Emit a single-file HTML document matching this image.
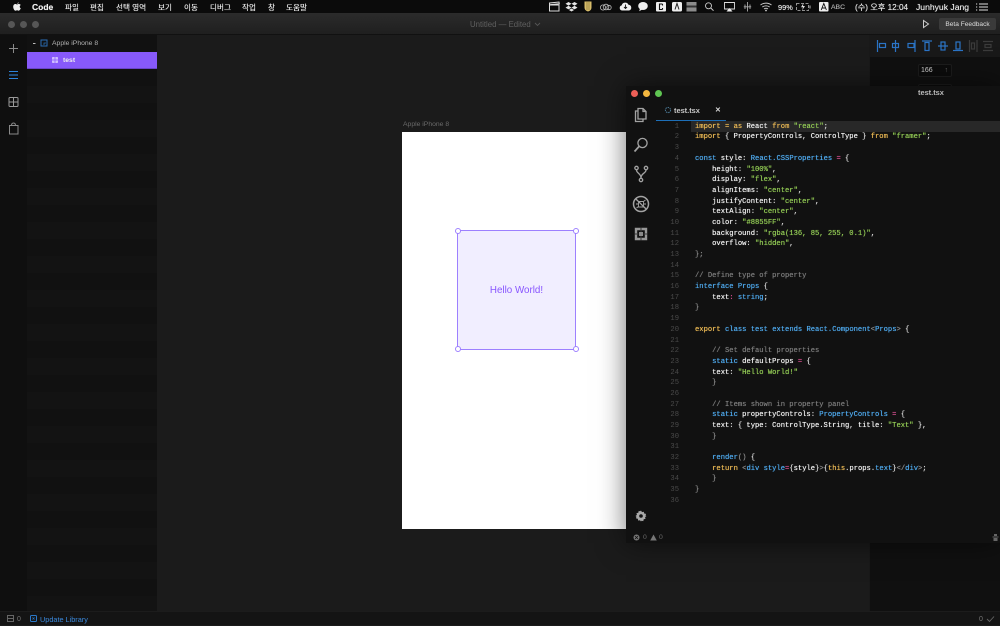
<!DOCTYPE html>
<html>
<head>
<meta charset="utf-8">
<style>
html{margin:0;padding:0;background:#1b1b1b}
body{margin:0;padding:0;width:1000px;height:625px;position:relative;overflow:hidden;background:#1b1b1b;font-family:"Liberation Sans","Noto Sans CJK KR",sans-serif;filter:blur(.3px)}
.a{position:absolute}
.t{position:absolute;white-space:pre;line-height:12px}
#menu{left:0;top:0;width:1000px;height:13px;background:#0b0b0b}
#menu .t{top:.5px;line-height:13px;font-size:7.6px;color:#e2e2e2;text-shadow:0 0 .4px currentColor}
#title{left:0;top:13px;width:1000px;height:22px;background:linear-gradient(#2b2b2b,#1f1f1f);border-bottom:1px solid #111;box-sizing:border-box}
.dot{position:absolute;border-radius:50%;width:7px;height:7px}
#rail{left:0;top:35px;width:27px;height:576px;background:#0f0f0f}
#layers{left:27px;top:35px;width:130px;height:576px;background:repeating-linear-gradient(#111 0 17px,#131313 17px 34px)}
#right{left:869px;top:35px;width:131px;height:576px;background:#101010;border-left:1px solid #191919;box-sizing:border-box}
#bottom{left:0;top:611px;width:1000px;height:14px;background:#141414;border-top:1px solid #1c1c1c;box-sizing:border-box}
#board{left:402px;top:132px;width:240px;height:397px;background:#fff}
#sel{left:457px;top:230px;width:117px;height:117.500px;background:#f1eeff;border:1px solid #9d80ff;color:#8855ff;font-size:9.800px;line-height:119px;text-align:center}
.h{position:absolute;width:4px;height:4px;background:#fff;border:1px solid #9d80ff;border-radius:50%}
#ed{left:626px;top:86px;width:374px;height:457px;background:#111;box-shadow:0 0 26px rgba(0,0,0,.55)}
#code{position:absolute;left:69px;top:35.800px;font-family:"Liberation Mono",monospace;font-size:7.150px;line-height:10.686px;white-space:pre;color:#d9d9d9;text-shadow:0 0 .5px currentColor}
#nums{position:absolute;left:30px;width:23px;top:35.800px;text-align:right;font-family:"Liberation Mono",monospace;font-size:7.150px;line-height:10.686px;color:#4a4a4a;white-space:pre}
.k{color:#eebb55}.s{color:#93cc55}.b{color:#4fabf0}.p{color:#d64f90}.c{color:#7c7c7c}.w{color:#f2f2f2}.g{color:#8a8a8a}
svg{position:absolute;overflow:visible}
</style>
</head>
<body>
<!-- canvas elements -->
<div class="t" style="left:403px;top:119px;font-size:6.800px;color:#6a6a6a">Apple iPhone 8</div>
<div class="a" id="board"></div>
<div class="a" id="sel">Hello World!</div>
<div class="h" style="left:454.500px;top:227.500px"></div>
<div class="h" style="left:572.500px;top:227.500px"></div>
<div class="h" style="left:454.500px;top:346px"></div>
<div class="h" style="left:572.500px;top:346px"></div>

<!-- menu bar -->
<div class="a" id="menu">
  <svg style="left:13px;top:2px" width="8" height="9" viewBox="0 0 8 9"><path d="M5.600 0.300C5 .5 4.400 1.100 4.400 1.900 5.100 1.900 5.700 1.200 5.600 .3ZM4.100 2.400C3.500 2.400 3 2 2.400 2 1.200 2 .2 3.100 .2 4.700 .2 6.500 1.400 8.700 2.500 8.700 3 8.700 3.400 8.300 4.100 8.300 4.800 8.300 5.100 8.700 5.700 8.700 6.600 8.700 7.400 7.300 7.800 6.300 6.500 5.700 6.400 3.800 7.700 3 7.200 2.300 6.500 2 5.800 2 5.100 2 4.600 2.400 4.100 2.400Z" fill="#eee"/></svg>
  <div class="t" style="left:32px;font-weight:700;color:#eee;font-size:8.500px">Code</div>
  <div class="t" style="left:65px">파일</div>
  <div class="t" style="left:90px">편집</div>
  <div class="t" style="left:116px">선택 영역</div>
  <div class="t" style="left:158px">보기</div>
  <div class="t" style="left:184px">이동</div>
  <div class="t" style="left:210px">디버그</div>
  <div class="t" style="left:242px">작업</div>
  <div class="t" style="left:268px">창</div>
  <div class="t" style="left:286px">도움말</div>

  <svg style="left:0;top:0" width="1000" height="13" viewBox="0 0 1000 13">
    <path d="M549.500 5h9.500v6h-9.500zM549.500 3l9.500-1 .3 1.800-9.800 1z" fill="none" stroke="#ddd" stroke-width="1"/>
    <path d="M568.500 2l3 1.800-3 1.800-3-1.800zM574.500 2l3 1.800-3 1.800-3-1.800zM568.500 5.800l3 1.800-3 1.800-3-1.800zM574.500 5.800l3 1.800-3 1.800-3-1.800zM571.500 8.500l2.600 1.500-2.600 1.500-2.600-1.500z" fill="#e6e6e6"/>
    <path d="M584.500 1.500h7v6q0 3-3.500 4-3.500-1-3.500-4z" fill="#d8bd6a"/>
    <path d="M587 2v8M589 2v8" stroke="#8d7c3f" stroke-width=".8"/>
    <circle cx="603" cy="7.500" r="2.600" fill="none" stroke="#bbb" stroke-width=".8"/><circle cx="606" cy="7" r="2.800" fill="none" stroke="#bbb" stroke-width=".8"/><circle cx="609" cy="7.500" r="2.200" fill="none" stroke="#bbb" stroke-width=".8"/>
    <path d="M622 10.500a2.600 2.600 0 0 1-.3-5.100 3.600 3.600 0 0 1 6.800-.6 2.900 2.900 0 0 1 .6 5.700z" fill="#eee"/>
    <path d="M625.500 4.500v4M624 7l1.500 1.500L627 7" stroke="#111" stroke-width=".9" fill="none"/>
    <ellipse cx="643" cy="6" rx="4.800" ry="4" fill="#eee"/><path d="M640 8.500l-.8 2.800 3-1.800z" fill="#eee"/>
    <rect x="656" y="2" width="10" height="9.500" rx="1" fill="#eee"/><path d="M662.500 4h-3v5.500h3M662.500 4v1.500M662.500 8v1.500" stroke="#111" stroke-width="1.100" fill="none"/>
    <rect x="672" y="2" width="10" height="9.500" rx="1.500" fill="#eee"/><path d="M675 9.500l2-6 2 6" stroke="#222" stroke-width="1" fill="none"/>
    <rect x="686.500" y="2" width="10" height="9.500" fill="#8b8b8b"/><rect x="686.500" y="5.500" width="10" height="2" fill="#333"/>
    <circle cx="708.500" cy="5.800" r="3" fill="none" stroke="#ccc" stroke-width=".9"/><path d="M710.800 8l2.700 2.700" stroke="#ccc" stroke-width="1"/>
    <path d="M724.500 2.500h10v6.500h-10z" fill="none" stroke="#ddd" stroke-width=".9"/><path d="M726.500 11.500l3-3.500 3 3.500z" fill="#eee"/>
    <path d="M747.500 2v9.500M745 4.500v4.500M750 4.500v4.500M743.800 6.800h7.400" stroke="#aaa" stroke-width=".9"/>
    <path d="M760.500 5a9 9 0 0 1 11 0M762.300 7a6.200 6.200 0 0 1 7.400 0M764 9a3.300 3.300 0 0 1 4 0" stroke="#ccc" stroke-width=".9" fill="none"/><circle cx="766" cy="10.500" r=".9" fill="#ccc"/>
    <rect x="796.500" y="3.500" width="12" height="7" fill="none" stroke="#bbb" stroke-width=".8" stroke-dasharray="3 1.500"/><path d="M803.500 3l-2.500 4.200h2l-1 3.300 3-4.500h-2z" fill="#ddd"/><rect x="809.500" y="5.500" width="1" height="3" fill="#bbb"/>
    <rect x="819" y="2" width="9.500" height="9.500" rx="1" fill="#eee"/><path d="M821.200 10l2.600-6.500 2.600 6.500M822 8h3.600" stroke="#111" stroke-width=".9" fill="none"/>
    <path d="M976 4h1.200M976 7h1.200M976 10h1.200M979 4h9M979 7h9M979 10h9" stroke="#ddd" stroke-width="1"/>
  </svg>
  <div class="t" style="left:778px;font-size:7.400px">99%</div>
  <div class="t" style="left:831px;font-size:6.800px;color:#aaa">ABC</div>
  <div class="t" style="left:855px;font-size:8.200px">(수) 오후 12:04</div>
  <div class="t" style="left:916px;font-size:8.600px;color:#e6e6e6">Junhyuk Jang</div>
</div>

<!-- title bar -->
<div class="a" id="title">
  <div class="dot" style="left:8px;top:7.500px;background:#565656"></div>
  <div class="dot" style="left:20px;top:7.500px;background:#565656"></div>
  <div class="dot" style="left:32px;top:7.500px;background:#565656"></div>
  <div class="t" style="left:470px;top:5.500px;font-size:7.800px;color:#606060">Untitled — Edited</div>
  <svg style="left:534px;top:9px" width="7" height="5"><path d="M1 1l2.500 2.500L6 1" stroke="#555" fill="none" stroke-width=".9"/></svg>
  <svg style="left:922px;top:6px" width="8" height="10"><path d="M1.500 1.500v7l5-3.500z" stroke="#ccc" fill="none" stroke-width="1"/></svg>
  <div class="a" style="left:939px;top:5px;width:57px;height:12px;background:#3a3a3a;border-radius:2px;color:#ddd;font-size:6.600px;line-height:13px;text-align:center">Beta Feedback</div>
</div>

<!-- left rail -->
<div class="a" id="rail">
  <svg style="left:0;top:0" width="27" height="110">
    <path d="M13.500 9v9M9 13.500h9" stroke="#8a8a8a" stroke-width="1"/>
    <path d="M9 36.500h9M9 40h9M9 43.500h9" stroke="#2d84dc" stroke-width="1"/>
    <rect x="9" y="62.500" width="9" height="9" rx="1" fill="none" stroke="#9a9a9a" stroke-width="1"/><path d="M13.500 62.500v9M9 67h9" stroke="#9a9a9a" stroke-width="1"/>
    <path d="M9.500 90.500h8.500v8.500h-8.500zM11.500 90.500q0-2.500 2-2.500t2 2.500" fill="none" stroke="#8a8a8a" stroke-width="1"/>
  </svg>
</div>

<!-- layers -->
<div class="a" id="layers">
  <svg style="left:0;top:0" width="40" height="17">
    <path d="M6 8.500h2.500" stroke="#bbb" stroke-width="1"/>
    <rect x="14" y="5" width="6" height="6" fill="none" stroke="#2a6db5" stroke-width="1"/><path d="M17 10v-2h2" stroke="#2a6db5" fill="none" stroke-width=".8"/>
  </svg>
  <div class="t" style="left:25px;top:3px;font-size:6.800px;color:#b0b0b0">Apple iPhone 8</div>
  <div class="a" style="left:0;top:17px;width:130px;height:17px;background:#8759fa;border-bottom:1px solid #6a45c8;box-sizing:border-box">
    <svg style="left:25px;top:5px" width="6" height="6"><rect x=".5" y=".5" width="5" height="5" fill="#cdbcff" stroke="#e8e0ff" stroke-width=".6"/><path d="M3 0v6M0 3h6" stroke="#8759fa" stroke-width=".7"/></svg>
    <div class="t" style="left:36px;top:3px;font-size:6.800px;font-weight:700;color:#eee">test</div>
  </div>
</div>

<!-- right panel -->
<div class="a" id="right">
  <div class="a" style="left:0;top:0;width:131px;height:23px;background:#191919;border-bottom:1px solid #101010;box-sizing:border-box"></div>
  <svg style="left:-1px;top:0" width="132" height="23" fill="none" stroke-width="1.200">
    <g stroke="#2b74c6">
      <path d="M8.500 5v12"/><rect x="10.500" y="8.500" width="6" height="4"/>
      <path d="M26.500 5v12"/><rect x="23.500" y="8.500" width="6" height="4"/>
      <path d="M46 5v12"/><rect x="39" y="8.500" width="6" height="4"/>
      <path d="M53 6h10"/><rect x="56" y="7.500" width="4" height="8"/>
      <path d="M69 11h10"/><rect x="72" y="7" width="4" height="8"/>
      <path d="M84 15.500h10"/><rect x="87" y="7" width="4" height="7"/>
    </g>
    <g stroke="#3b3b3b">
      <path d="M100.500 5v12M108 5v12"/><rect x="102.500" y="8" width="3" height="6"/>
      <path d="M114 6.500h10M114 15.500h10"/><rect x="116" y="9.500" width="6" height="3"/>
    </g>
  </svg>
  <div class="a" style="left:48px;top:29px;width:34px;height:13px;background:#0c0c0c;border-radius:2px;border:1px solid #1c1c1c;box-sizing:border-box;color:#d0d0d0;font-size:7px;line-height:11.500px;padding-left:2px">166<span style="position:absolute;right:3px;color:#666">↑</span></div>
  <div class="a" style="left:48px;top:49px;width:34px;height:13px;background:#0c0c0c;border-radius:2px;border:1px solid #1c1c1c;box-sizing:border-box"></div>
</div>

<!-- bottom bar -->
<div class="a" id="bottom">
  <svg style="left:6px;top:2px" width="10" height="10"><rect x="1.500" y="1.500" width="6" height="6" fill="none" stroke="#666"/><path d="M1.500 4.500h6" stroke="#666"/></svg>
  <div class="t" style="left:17px;top:1.500px;font-size:7px;color:#777">0</div>
  <svg style="left:29px;top:2px" width="10" height="10"><rect x="1.500" y="1.500" width="6" height="6" rx="1" fill="none" stroke="#2a78c8"/><path d="M3.500 3.500l2 2M5.500 3.500l-2 2" stroke="#2a78c8" stroke-width=".7"/></svg>
  <div class="t" style="left:40px;top:1.500px;font-size:7.300px;color:#3b8ade">Update Library</div>
  <div class="t" style="left:979px;top:1.500px;font-size:7px;color:#777">0</div>
  <svg style="left:986px;top:2px" width="10" height="10"><path d="M1 5l2.500 2.500L8 2.500" stroke="#666" fill="none" stroke-width=".9"/></svg>
</div>

<!-- editor -->
<div class="a" id="ed">
  <div class="dot" style="left:5px;top:3.500px;background:#ec5f57"></div>
  <div class="dot" style="left:17px;top:3.500px;background:#f4b73f"></div>
  <div class="dot" style="left:28.500px;top:3.500px;background:#5fc552"></div>
  <div class="t" style="left:292px;top:1px;font-size:7.400px;font-weight:700;color:#bbb">test.tsx</div>
  <div class="a" style="left:30px;top:34px;width:70px;height:1px;background:#1d6fb8"></div>
  <svg style="left:38px;top:20px" width="8" height="8"><circle cx="4" cy="4" r="2.600" fill="none" stroke="#4a7894" stroke-width="1" stroke-dasharray="1.500 .8"/></svg>
  <div class="t" style="left:48px;top:19px;font-size:7.400px;font-weight:700;color:#c9c9c9">test.tsx</div>
  <div class="t" style="left:89px;top:19px;font-size:7px;font-weight:700;color:#ddd">✕</div>
  <div class="a" style="left:65px;top:35px;width:309px;height:10.700px;background:#282828"></div>

  <svg style="left:0;top:0" width="30" height="450" fill="none" stroke="#a3a3a3" stroke-width="1.300">
    <path d="M12 22.500h5l3 3v7.500h-8zM12 25h-2.500v10.500h7.500v-2.500M17 22.500v3h3"/>
    <circle cx="16.500" cy="57" r="4.600"/><path d="M13 60.500l-4.500 5" stroke-width="1.700"/>
    <circle cx="10.500" cy="82" r="1.700"/><circle cx="20" cy="82" r="1.700"/><circle cx="15" cy="94" r="1.700"/><path d="M10.500 84c0 3.500 4.500 3 4.500 8M20 84c0 3.500-5 3-5 8"/>
    <circle cx="15" cy="118" r="7.500" stroke-width="1.500"/><path d="M9.800 112.800l10.400 10.400" stroke-width="1.300"/><path d="M12.500 115.500h5v5.500h-5zM10 118h2.500M17.500 118h2.500M10.500 122l2-1.500M19.500 122l-2-1.500M10.500 114l2 1.500M19.500 114l-2 1.500" stroke-width=".9"/>
    <path d="M10 143h10v10h-10z" stroke-width="2.400" stroke="#989898"/><path d="M15 141.500v4.500M15 150v4.500M8.500 148h4M17.500 148h4" stroke="#3a3a3a" stroke-width="1"/><rect x="13" y="146" width="4" height="4" fill="#8a8a8a" stroke="none"/>
  </svg>
  <svg style="left:9px;top:424px" width="12" height="12" viewBox="0 0 12 12"><path d="M6 0.500l1 1.600 1.800-.4.400 1.800 1.800.4-.4 1.800L11.500 6l-1.400 1.100.4 1.800-1.800.4-.4 1.800-1.800-.4L6 11.500l-1-1.300-1.800.4-.4-1.800-1.800-.4.400-1.800L.5 6l1.400-1.100-.4-1.800 1.800-.4.400-1.800L5 1.300z" fill="#a8a8a8"/><circle cx="6" cy="6" r="1.800" fill="#111"/></svg>

<div id="nums">1
2
3
4
5
6
7
8
9
10
11
12
13
14
15
16
17
18
19
20
21
22
23
24
25
26
27
28
29
30
31
32
33
34
35
36</div>
<div id="code"><span class="k">import</span> <span class="k">=</span> <span class="k">as</span> <span class="w">React</span> <span class="k">from</span> <span class="s">"react"</span>;
<span class="k">import</span> { <span class="w">PropertyControls</span>, <span class="w">ControlType</span> } <span class="k">from</span> <span class="s">"framer"</span>;

<span class="b">const</span> <span class="w">style</span>: <span class="b">React.CSSProperties</span> <span class="p">=</span> {
    <span class="w">height</span>: <span class="s">"100%"</span>,
    <span class="w">display</span>: <span class="s">"flex"</span>,
    <span class="w">alignItems</span>: <span class="s">"center"</span>,
    <span class="w">justifyContent</span>: <span class="s">"center"</span>,
    <span class="w">textAlign</span>: <span class="s">"center"</span>,
    <span class="w">color</span>: <span class="s">"#8855FF"</span>,
    <span class="w">background</span>: <span class="s">"rgba(136, 85, 255, 0.1)"</span>,
    <span class="w">overflow</span>: <span class="s">"hidden"</span>,
<span class="g">};</span>

<span class="c">// Define type of property</span>
<span class="b">interface</span> <span class="b">Props</span> {
    <span class="w">text</span><span class="p">:</span> <span class="b">string</span>;
<span class="g">}</span>

<span class="k">export</span> <span class="b">class</span> <span class="b">test</span> <span class="b">extends</span> <span class="b">React.Component</span><span class="g">&lt;</span><span class="b">Props</span><span class="g">&gt;</span> {

    <span class="c">// Set default properties</span>
    <span class="b">static</span> <span class="w">defaultProps</span> <span class="p">=</span> {
    <span class="w">text</span>: <span class="s">"Hello World!"</span>
    <span class="g">}</span>

    <span class="c">// Items shown in property panel</span>
    <span class="b">static</span> <span class="w">propertyControls</span>: <span class="b">PropertyControls</span> <span class="p">=</span> {
    <span class="w">text</span>: { <span class="w">type</span>: <span class="w">ControlType.String</span>, <span class="w">title</span>: <span class="s">"Text"</span> },
    <span class="g">}</span>

    <span class="b">render</span><span class="g">()</span> {
    <span class="k">return</span> <span class="g">&lt;</span><span class="b">div</span> <span class="b">style</span><span class="p">=</span>{<span class="w">style</span>}<span class="g">&gt;</span>{<span class="k">this</span>.<span class="w">props</span>.<span class="b">text</span>}<span class="g">&lt;/</span><span class="b">div</span><span class="g">&gt;</span>;
    <span class="g">}</span>
<span class="g">}</span>
</div>

  <svg style="left:6px;top:447px" width="40" height="9"><circle cx="4.500" cy="4.500" r="3" fill="#777"/><path d="M3 3l3 3M6 3l-3 3" stroke="#111" stroke-width=".8"/><path d="M21.500 1.500l3.300 6h-6.600z" fill="#777"/></svg>
  <div class="t" style="left:17px;top:446px;font-size:6.800px;color:#6a6a6a">0</div>
  <div class="t" style="left:33px;top:446px;font-size:6.800px;color:#6a6a6a">0</div>
  <svg style="left:366px;top:447px" width="8" height="9"><path d="M2 1h3v2H2zM.5 3.500h6v1h-6zM1.500 5h4v3h-4z" fill="#666"/></svg>
</div>
</body>
</html>
